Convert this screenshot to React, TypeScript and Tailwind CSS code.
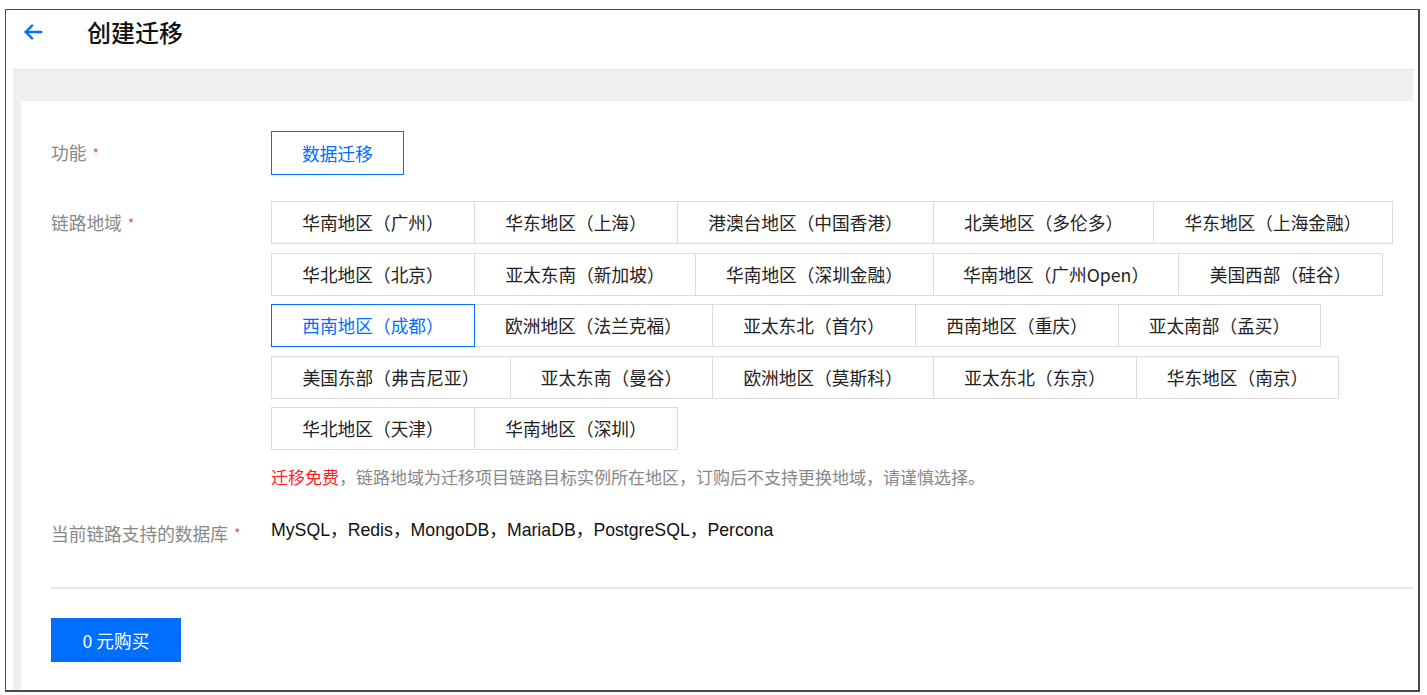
import React from "react";

type Tag = { t: string; w: number; sel?: boolean };

const rows: Tag[][] = [
  [
    { t: "华南地区（广州）", w: 204 },
    { t: "华东地区（上海）", w: 204 },
    { t: "港澳台地区（中国香港）", w: 257 },
    { t: "北美地区（多伦多）", w: 221 },
    { t: "华东地区（上海金融）", w: 240 },
  ],
  [
    { t: "华北地区（北京）", w: 204 },
    { t: "亚太东南（新加坡）", w: 222 },
    { t: "华南地区（深圳金融）", w: 239 },
    { t: "华南地区（广州Open）", w: 246 },
    { t: "美国西部（硅谷）", w: 205 },
  ],
  [
    { t: "西南地区（成都）", w: 204, sel: true },
    { t: "欧洲地区（法兰克福）", w: 239 },
    { t: "亚太东北（首尔）", w: 204 },
    { t: "西南地区（重庆）", w: 204 },
    { t: "亚太南部（孟买）", w: 203 },
  ],
  [
    { t: "美国东部（弗吉尼亚）", w: 240 },
    { t: "亚太东南（曼谷）", w: 203 },
    { t: "欧洲地区（莫斯科）", w: 222 },
    { t: "亚太东北（东京）", w: 204 },
    { t: "华东地区（南京）", w: 203 },
  ],
  [
    { t: "华北地区（天津）", w: 204 },
    { t: "华南地区（深圳）", w: 204 },
  ],
];

const FONT = "font-['Microsoft_YaHei','Noto_Sans_CJK_SC',sans-serif]";

function Label({ text }: { text: string }) {
  return (
    <div className="w-[220px] shrink-0 h-[43px] flex items-center text-[#888] text-[17.7px]">
      <span>{text}</span>
      <span className="ml-[6px] text-[#e05a5a] text-[14px] leading-none">*</span>
    </div>
  );
}

export default function App() {
  return (
    <div className={`w-[1427px] h-[695px] bg-white pt-[9px] pl-[5px] ${FONT}`}>
      <div className="w-[1415px] h-[683px] border-l border-t border-r-2 border-b-2 border-[#4a4a4a] flex flex-col bg-white">
        {/* header */}
        <div className="h-[59px] shrink-0">
          <div className="h-[43px] flex items-center">
            <svg
              className="ml-[16px]"
              width="22"
              height="22"
              viewBox="0 0 24 24"
              fill="none"
              stroke="#006eff"
              strokeWidth="2.6"
              strokeLinecap="round"
              strokeLinejoin="round"
            >
              <path d="M21 12H4" />
              <path d="M11 5l-7 7 7 7" />
            </svg>
            <h1 className="ml-[43px] text-[24px] leading-[32px] font-medium text-[#111]">创建迁移</h1>
          </div>
        </div>
        {/* gray area */}
        <div className="flex-1 ml-[7px] mr-[5px] border-t border-[#e2e2e2] bg-[#f0f0f0] pt-[31px] pl-[8px] flex flex-col">
          <div className="flex-1 bg-white pl-[30px] pt-[30px]">
            {/* 功能 */}
            <div className="flex">
              <Label text="功能" />
              <div className="w-[133px] h-[44px] border border-[#006eff] text-[#006eff] text-[17.7px] flex items-center justify-center">
                数据迁移
              </div>
            </div>
            {/* 链路地域 */}
            <div className="flex mt-[26px]">
              <Label text="链路地域" />
              <div className="flex flex-col">
                <div className="flex flex-col gap-[8.5px]">
                  {rows.map((row, i) => (
                    <div key={i} className="flex">
                      {row.map((tag, j) => (
                        <div
                          key={j}
                          style={{ width: tag.w }}
                          className={`h-[43px] shrink-0 flex items-center justify-center text-[17.7px] border ${
                            j > 0 ? "-ml-px" : ""
                          } ${
                            tag.sel
                              ? "border-[#006eff] text-[#006eff] relative z-10"
                              : "border-[#dcdcdc] text-[#222]"
                          }`}
                        >
                          {tag.t}
                        </div>
                      ))}
                    </div>
                  ))}
                </div>
                <div className="mt-[15px] text-[17px] leading-[24px] text-[#888]">
                  <span className="text-[#ff2020]">迁移免费</span>
                  ，链路地域为迁移项目链路目标实例所在地区，订购后不支持更换地域，请谨慎选择。
                </div>
              </div>
            </div>
            {/* 数据库 */}
            <div className="flex mt-[29px]">
              <div className="w-[220px] shrink-0 h-[24px] flex items-center text-[#888] text-[17.7px] mt-[3px]">
                <span>当前链路支持的数据库</span>
                <span className="ml-[6px] text-[#e05a5a] text-[14px] leading-none">*</span>
              </div>
              <div className="font-['Liberation_Sans','Noto_Sans_CJK_SC',sans-serif] text-[17.7px] leading-[24px] text-[#111]">
                MySQL，Redis，MongoDB，MariaDB，PostgreSQL，Percona
              </div>
            </div>
            <div className="mt-[42px] h-[2px] bg-[#e6e6e6]" />
            <button className="mt-[29px] w-[130px] h-[44px] bg-[#006eff] text-white text-[17.7px] flex items-center justify-center">
              0 元购买
            </button>
          </div>
        </div>
      </div>
    </div>
  );
}
